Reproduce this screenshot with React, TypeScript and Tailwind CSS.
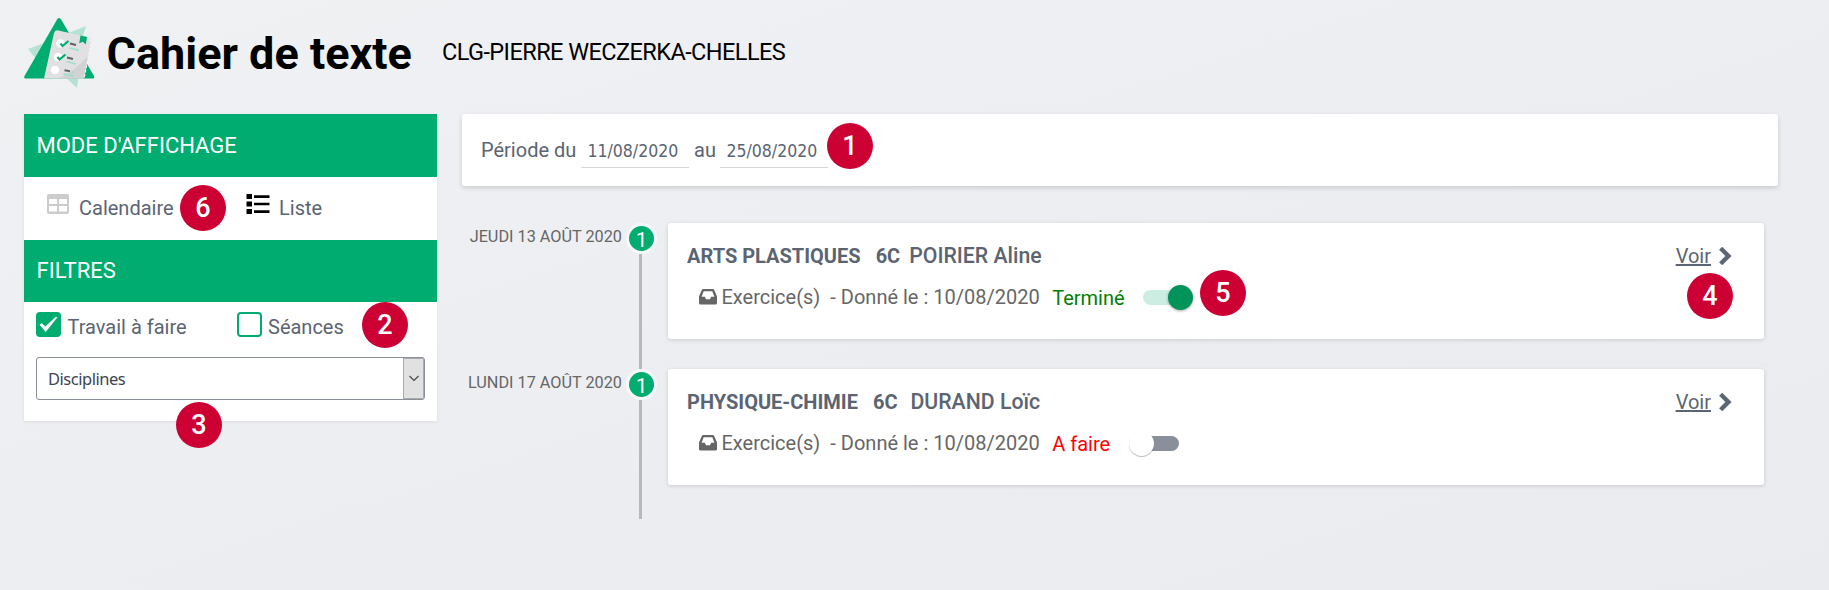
import React from "react";

function Marker({ n, pos }: { n: string; pos: string }) {
  return (
    <span
      className={`absolute z-10 flex h-[46px] w-[46px] items-center justify-center rounded-full bg-[#cc0033] text-[27px] leading-none font-medium text-white ${pos}`}
    >
      {n}
    </span>
  );
}

function Logo() {
  return (
    <svg width="72" height="72" viewBox="0 0 72 72" className="shrink-0">
      <path d="M62 8 L39 17 L55 31 Z M4 31 L28 22 L16 46 Z M38 56 L53 70 L55 54 Z" fill="#b5e3d3" />
      <path d="M33.200 1.200 Q35 -1 37 1.200 L70 58 Q71 60.500 68.500 60.500 H2 Q-0.500 60.500 0.500 58 Z" fill="#00ac6f" />
      <path d="M33.500 12.300 L65 19.500 Q68 21 67.500 24 L60 60.500 H20 L30 15 Q31 12 33.500 12.300Z" fill="#e1e1e3" />
      <path d="M64 38 Q50 54 34 60.500 H60 Z" fill="#d2d2d4" />
      <path d="M65.500 21.500 L67.500 24 L60 60.500" fill="none" stroke="#f6f6f6" strokeWidth="1.200" strokeDasharray="3 1.500" />
      <path d="M56.500 17.500 L63 19 L61.800 26.500 L58.800 23.700 L55.200 25.200 Z" fill="#00ac6f" />
      <circle cx="36.500" cy="25.500" r="4.300" fill="#fff" />
      <circle cx="34" cy="39" r="4.300" fill="#fff" />
      <circle cx="31" cy="52" r="4.300" fill="#fff" />
      <path d="M36.500 25.500 L38.500 28 L44.500 23 M33.500 39 L35.500 41.500 L41.500 36.500" fill="none" stroke="#00ac6f" strokeWidth="2.200" />
      <path d="M46 25.500 L52 27 M43 39.500 L49 41 M40.500 52.300 L46 53.300" stroke="#606068" strokeWidth="2" />
      <path d="M45.500 30 L55 32.300 M42.500 43.500 L52 46 M39.500 56 L49.500 58 M48 53.800 L50 54.300" stroke="#a3dcc8" strokeWidth="1.800" />
    </svg>
  );
}

function TableIcon() {
  return (
    <svg width="22" height="20" viewBox="0 0 22 20" className="shrink-0">
      <path
        fillRule="evenodd"
        fill="#ccc"
        d="M2 0H20Q22 0 22 2V18Q22 20 20 20H2Q0 20 0 18V2Q0 0 2 0ZM2 5V10H10V5ZM12 5V10H20V5ZM2 12V17.500H10V12ZM12 12V17.500H20V12Z"
      />
    </svg>
  );
}

function ListIcon() {
  return (
    <svg width="24" height="20" viewBox="0 0 24 20" className="shrink-0">
      <path d="M.5 0H6V5H.5ZM.5 7.500H6V12.500H.5ZM.5 15H6V20H.5ZM8 1.300H23.500V4H8ZM8 8.700H23.500V11.300H8ZM8 16.200H23.500V19H8Z" fill="#000" />
    </svg>
  );
}

function InboxIcon() {
  return (
    <svg width="18" height="16" viewBox="0 0 18 16" className="shrink-0">
      <path
        fillRule="evenodd"
        fill="#666"
        d="M4.200 0H13.800Q14.700 0 15.200 .9L17.600 6.500Q18 7.300 18 8.200V14Q18 15.500 16.500 15.500H1.500Q0 15.500 0 14V8.200Q0 7.300 .4 6.500L2.800 .9Q3.300 0 4.200 0ZM4.700 2.200L2.600 7.700H5.800L7 10.300H11L12.200 7.700H15.400L13.300 2.200Z"
      />
    </svg>
  );
}

function Chevron() {
  return (
    <svg width="13" height="18" viewBox="0 0 13 18" className="block shrink-0">
      <path d="M3.200 0L12.300 9L3.200 18L.4 15.200L6.600 9L.4 2.800Z" fill="#5b6472" stroke="#5b6472" strokeWidth=".5" strokeLinejoin="round" />
    </svg>
  );
}

function Toggle({ on }: { on: boolean }) {
  return on ? (
    <span className="flex h-[25px] w-[50px] items-center justify-end rounded-full">
      <span className="-mr-[20px] h-[15px] w-[45px] rounded-full bg-[#cceee2]" />
      <span className="h-[25px] w-[25px] rounded-full bg-[#00945a] shadow-[0_1px_3px_rgba(0,0,0,0.35)]" />
    </span>
  ) : (
    <span className="flex h-[25px] w-[50px] items-center">
      <span className="z-[1] h-[25px] w-[25px] shrink-0 rounded-full bg-white shadow-[0_1px_1px_rgba(0,0,0,0.28)]" />
      <span className="-ml-[20px] h-[15px] w-[45px] shrink-0 rounded-full bg-[#8a8f9c]" />
    </span>
  );
}

interface Entry {
  date: string;
  subject: string;
  teacher: string;
  teacherGap: string;
  done: boolean;
}

const entries: Entry[] = [
  { date: "JEUDI 13 AOÛT 2020", subject: "ARTS PLASTIQUES", teacher: "POIRIER Aline", teacherGap: "ml-[9px]", done: true },
  { date: "LUNDI 17 AOÛT 2020", subject: "PHYSIQUE-CHIMIE", teacher: "DURAND Loïc", teacherGap: "ml-[13px]", done: false },
];

function TimelineRow({ e }: { e: Entry }) {
  return (
    <div className="flex h-[146px] items-start">
      <div className="w-[160px] pt-[4px] text-right text-[16.250px] leading-5 whitespace-nowrap text-[#666]">{e.date}</div>
      <div className="relative ml-[4px] flex h-[31px] w-[31px] items-center justify-center rounded-full border-[3px] border-[#f7f8f9] bg-[#00ac6f] pt-[3px] text-[20px] leading-none text-white">
        1
      </div>
      <div className="ml-[11px] flex h-[116px] w-[1096px] flex-col rounded-[3px] bg-white pt-[20px] pr-[32px] pl-[19px] shadow-[0_1px_4px_rgba(0,0,0,0.15)]">
        <div className="flex h-[26px] items-center whitespace-nowrap text-[#5b6472]">
          <span className="font-bold">{e.subject}</span>
          <span className="ml-[15px] font-bold">6C</span>
          <span className={`text-[21.250px] font-medium ${e.teacherGap}`}>{e.teacher}</span>
          <a className="ml-auto underline">Voir</a>
          <span className="ml-[8px]">
            <Chevron />
          </span>
        </div>
        <div className="mt-[15px] flex h-[26px] items-center pl-[12px] whitespace-nowrap text-[#666]">
          <InboxIcon />
          <span className="ml-[4.500px]">Exercice(s)</span>
          <span className="ml-[10px]">- Donné le : 10/08/2020</span>
          <span className={`ml-[12.500px] pt-[1px] ${e.done ? "text-[#008000]" : "text-[#ff0000]"}`}>{e.done ? "Terminé" : "A faire"}</span>
          <span className={e.done ? "ml-[18px]" : "ml-[19px]"}>
            <Toggle on={e.done} />
          </span>
        </div>
      </div>
    </div>
  );
}

export default function App() {
  return (
    <div className="relative h-[590px] w-[1829px] overflow-hidden bg-linear-to-br from-[#f0f1f3] via-[#edeef2] to-[#eaebef] font-['Roboto',sans-serif] text-[20px] leading-[26px]">
      <header className="flex h-[114px] items-start pl-[24px]">
        <div className="pt-[18px]">
          <Logo />
        </div>
        <h1 className="ml-[10.500px] pt-[26px] text-[45px] leading-[56px] font-bold whitespace-nowrap text-black">Cahier de texte</h1>
        <span className="ml-[30px] pt-[38px] text-[23.500px] leading-[28px] tracking-[-0.560px] whitespace-nowrap text-black">
          CLG-PIERRE WECZERKA-CHELLES
        </span>
      </header>

      <div className="flex items-start pl-[24px]">
        <aside className="h-[307px] w-[413px] bg-white text-[#5b6472] shadow-[0_1px_3px_rgba(0,0,0,0.08)]">
          <div className="flex h-[63px] items-center bg-[#00ac6f] pl-[12.500px] text-[22px] text-white">MODE D'AFFICHAGE</div>
          <div className="flex h-[63px] items-start pt-[17px] pl-[23px]">
            <TableIcon />
            <span className="ml-[10px] w-[167px] pt-[1px]">Calendaire</span>
            <ListIcon />
            <span className="ml-[9px] pt-[1px]">Liste</span>
          </div>
          <div className="flex h-[62px] items-center bg-[#00ac6f] pl-[12.500px] text-[22px] text-white">FILTRES</div>
          <div className="flex h-[45px] items-start pt-[10px] pl-[12px]">
            <span className="flex h-[25px] w-[25px] items-center justify-center rounded-[4px] bg-[#00ac6f]">
              <svg width="19" height="17" viewBox="0 0 19 17">
                <path d="M.5 8.800L2.800 7.200L6.300 10.500L16.500 1L18.500 1.200L6.700 16Z" fill="#fff" />
              </svg>
            </span>
            <span className="ml-[6.500px] w-[169.500px] pt-[2px]">Travail à faire</span>
            <span className="h-[25px] w-[25px] rounded-[4px] border-2 border-[#00ac6f]" />
            <span className="ml-[6px] pt-[2px]">Séances</span>
          </div>
          <div className="mt-[10px] ml-[12px] flex h-[43px] w-[389px] items-center rounded-[3px] border border-[#8a8f9c] pl-[11px]">
            <span className="font-['Noto_Sans',sans-serif] text-[16.500px] tracking-[-0.480px] text-[#3c4450]">Disciplines</span>
            <span className="ml-auto flex h-[41px] w-[21px] items-center justify-center border border-[#aaa] bg-[#e1e1e1]">
              <svg width="10" height="7" viewBox="0 0 10 7">
                <path d="M.5 1L5 5.500L9.500 1" fill="none" stroke="#444" strokeWidth="1.100" />
              </svg>
            </span>
          </div>
        </aside>

        <main className="ml-[25px] w-[1316px]">
          <div className="flex h-[72px] items-start rounded-[3px] bg-white pt-[17px] pl-[19px] text-[#5b6472] shadow-[0_2px_5px_rgba(0,0,0,0.15)]">
            <span className="w-[100px] pt-[6px]">Période du</span>
            <span className="h-[37px] w-[108px] border-b border-[#d5d7da] pt-[7px] pl-[6.500px] font-['DejaVu_Sans_Condensed','Noto_Sans',sans-serif] text-[17.500px]">
              11/08/2020
            </span>
            <span className="w-[31px] pt-[6px] pl-[5px]">au</span>
            <span className="h-[37px] w-[108px] border-b border-[#d5d7da] pt-[7px] pl-[6.500px] font-['DejaVu_Sans_Condensed','Noto_Sans',sans-serif] text-[17.500px]">
              25/08/2020
            </span>
          </div>
          <div className="relative mt-[37px] h-[296px]">
            <div className="absolute top-[16px] left-[177px] h-[280px] w-[3px] bg-[#b8b8b8]" />
            <div className="relative">
              {entries.map((e) => (
                <TimelineRow key={e.date} e={e} />
              ))}
            </div>
          </div>
        </main>
      </div>

      <Marker n="1" pos="left-[827px] top-[123px]" />
      <Marker n="6" pos="left-[180px] top-[185px]" />
      <Marker n="2" pos="left-[362px] top-[302px]" />
      <Marker n="3" pos="left-[176px] top-[402px]" />
      <Marker n="5" pos="left-[1200px] top-[270px]" />
      <Marker n="4" pos="left-[1687px] top-[273px]" />
    </div>
  );
}
